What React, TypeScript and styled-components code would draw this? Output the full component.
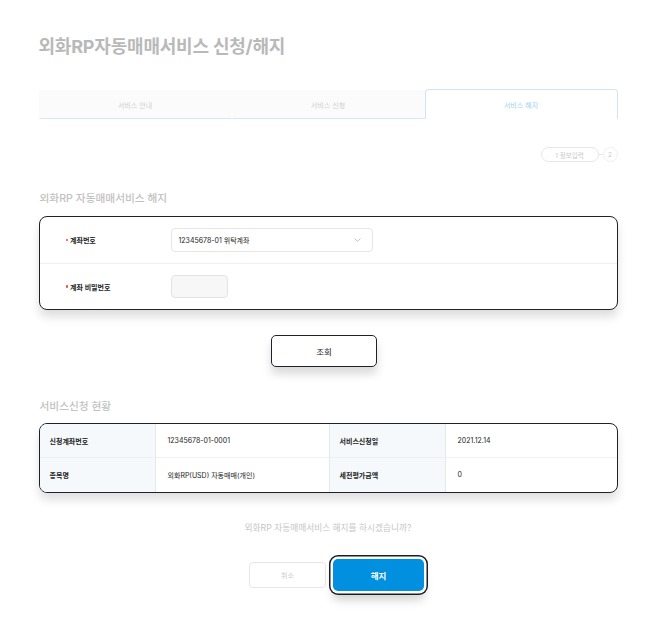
import styled, { createGlobalStyle } from 'styled-components';

const GlobalStyle = createGlobalStyle`
  * { box-sizing: border-box; }
  body {
    margin: 0;
    background: #ffffff;
    font-family: Inter, "Noto Sans CJK KR", sans-serif;
    color: #222;
  }
`;

const tabs = ['서비스 안내', '서비스 신청', '서비스 해지'];

const App = () => {
  return (
    <>
      <GlobalStyle />
      <Page>
        <Title>외화RP자동매매서비스 신청/해지</Title>

        <Tabs>
          {tabs.map((t, i) => (
            <Tab key={t} $active={i === 2}>{t}</Tab>
          ))}
        </Tabs>

        <Steps>
          <StepPill>1 정보입력</StepPill>
          <StepLine />
          <StepCircle>2</StepCircle>
        </Steps>

        <SectionTitle $gap={30}>외화RP 자동매매서비스 해지</SectionTitle>
        <FormCard>
          <FormRow>
            <FieldLabel>계좌번호</FieldLabel>
            <Select>
              <span>12345678-01 위탁계좌</span>
              <svg width="7" height="4" viewBox="0 0 7 4">
                <path d="M0.5 0.5 L3.5 3.3 L6.5 0.5" fill="none" stroke="#b5b5b5" strokeWidth="0.8" />
              </svg>
            </Select>
          </FormRow>
          <FormRow>
            <FieldLabel>계좌 비밀번호</FieldLabel>
            <PasswordBox />
          </FormRow>
        </FormCard>

        <Center>
          <LookupButton>조회</LookupButton>
        </Center>

        <SectionTitle $gap={33}>서비스신청 현황</SectionTitle>
        <InfoTable>
          <Th>신청계좌번호</Th>
          <Td $divider>12345678-01-0001</Td>
          <Th>서비스신청일</Th>
          <Td>2021.12.14</Td>
          <Th $last>종목명</Th>
          <Td $last $divider>외화RP(USD) 자동매매(개인)</Td>
          <Th $last>세전평가금액</Th>
          <Td $last>0</Td>
        </InfoTable>

        <Question>외화RP 자동매매서비스 해지를 하시겠습니까?</Question>
        <ButtonRow>
          <CancelButton>취소</CancelButton>
          <ConfirmButton>해지</ConfirmButton>
        </ButtonRow>
      </Page>
    </>
  );
};

export default App;

const Page = styled.div`
  width: 579px;
  margin: 0 auto;
  padding: 35px 0 30px;
`;

const Title = styled.h1`
  margin: 0;
  font-size: 18px;
  line-height: 24px;
  font-weight: 700;
  letter-spacing: -0.2px;
  color: #b9b9b9;
`;

const Tabs = styled.div`
  margin-top: 30px;
  display: grid;
  grid-template-columns: repeat(3, 1fr);
  height: 30px;
`;

const Tab = styled.div<{ $active: boolean }>`
  display: flex;
  align-items: center;
  justify-content: center;
  font-size: 7px;
  color: ${({ $active }) => ($active ? '#9fd0ef' : '#d0d0d0')};
  background: ${({ $active }) => ($active ? '#ffffff' : '#fbfbfb')};
  margin-top: ${({ $active }) => ($active ? '0' : '1px')};
  border: 1px solid ${({ $active }) => ($active ? '#cde6f6' : 'transparent')};
  border-bottom: ${({ $active }) => ($active ? 'none' : '1px solid #d4e9f7')};
  border-radius: ${({ $active }) => ($active ? '4px 4px 0 0' : '0')};
`;

const Steps = styled.div`
  margin-top: 28px;
  display: flex;
  justify-content: flex-end;
  align-items: center;
  height: 15px;
`;

const StepPill = styled.div`
  height: 15px;
  width: 58px;
  border: 1px solid #e6e6e6;
  border-radius: 8px;
  display: flex;
  align-items: center;
  justify-content: center;
  font-size: 6.5px;
  color: #c9c9c9;
`;

const StepLine = styled.div`
  width: 4px;
  height: 1px;
  background: #e6e6e6;
`;

const StepCircle = styled.div`
  width: 15px;
  height: 15px;
  border: 1px solid #f0f0f0;
  border-radius: 50%;
  display: flex;
  align-items: center;
  justify-content: center;
  font-size: 6.5px;
  color: #c9c9c9;
`;

const SectionTitle = styled.h2<{ $gap: number }>`
  margin: ${({ $gap }) => $gap}px 0 0 1px;
  font-size: 10.7px;
  line-height: 14px;
  font-weight: 500;
  color: #c2c2c2;
`;

const FormCard = styled.div`
  margin-top: 10px;
  border: 1.5px solid #1e2129;
  border-radius: 8px;
  background: #fff;
  box-shadow: 0 7px 10px rgba(0, 0, 0, 0.13);
`;

const FormRow = styled.div`
  display: flex;
  align-items: center;
  height: 46px;
  padding-left: 26px;

  & + & {
    border-top: 1px solid #efefef;
  }
`;

const FieldLabel = styled.div`
  width: 105px;
  font-size: 7px;
  font-weight: 600;
  color: #222;
  display: flex;
  align-items: center;

  &::before {
    content: '';
    width: 2.5px;
    height: 2.5px;
    border-radius: 50%;
    background: #e8484a;
    margin-right: 2px;
  }
`;

const Select = styled.div`
  width: 202px;
  height: 24px;
  border: 1px solid #e6e6e6;
  border-radius: 4px;
  display: flex;
  align-items: center;
  justify-content: space-between;
  padding: 0 11px 0 7px;
  font-size: 7px;
  color: #222;
`;

const PasswordBox = styled.div`
  width: 57px;
  height: 23px;
  border: 1px solid #e3e3e3;
  border-radius: 4px;
  background: #f7f7f7;
`;

const Center = styled.div`
  display: flex;
  justify-content: center;
  margin-top: 25px;
`;

const LookupButton = styled.button`
  width: 106px;
  height: 32px;
  margin-right: 8px;
  border: 1.5px solid #1e2129;
  border-radius: 5px;
  background: #fff;
  font-family: inherit;
  font-size: 8.5px;
  color: #222;
  box-shadow: 0 7px 10px rgba(0, 0, 0, 0.15);
`;

const InfoTable = styled.div`
  margin-top: 9px;
  display: grid;
  grid-template-columns: 116px 174px 116px 1fr;
  border: 1.5px solid #1e2129;
  border-radius: 8px;
  overflow: hidden;
  box-shadow: 0 7px 10px rgba(0, 0, 0, 0.12);
`;

const Cell = styled.div<{ $last?: boolean; $divider?: boolean }>`
  height: ${({ $last }) => ($last ? '33.5px' : '34px')};
  display: flex;
  align-items: center;
  font-size: 7px;
  color: #222;
  border-bottom: ${({ $last }) => ($last ? 'none' : '1px solid #eef1f4')};
  border-right: ${({ $divider }) => ($divider ? '1px solid #e3e8ee' : 'none')};
`;

const Th = styled(Cell)`
  background: #f6f9fc;
  padding-left: 10px;
  font-weight: 600;
  border-right: 1px solid #e3e8ee;
`;

const Td = styled(Cell)`
  padding-left: 12px;
`;

const Question = styled.p`
  margin: 29px 0 0;
  text-align: center;
  font-size: 8.7px;
  line-height: 12px;
  color: #c6c6c6;
`;

const ButtonRow = styled.div`
  margin-top: 25px;
  display: flex;
  justify-content: center;
  align-items: center;
  gap: 7px;
  padding-left: 17px;
`;

const CancelButton = styled.button`
  width: 77px;
  height: 26px;
  border: 1px solid #e6e6e6;
  border-radius: 4px;
  background: #fff;
  font-family: inherit;
  font-size: 7px;
  color: #cbcbcb;
`;

const ConfirmButton = styled.button`
  width: 91px;
  height: 32px;
  border: none;
  border-radius: 5px;
  background: #0090df;
  font-family: inherit;
  font-size: 8.5px;
  font-weight: 700;
  color: #fff;
  box-shadow: 0 0 0 2.5px #fff, 0 0 0 4px #1b1d25, 0 9px 10px rgba(0, 0, 0, 0.18);
`;
